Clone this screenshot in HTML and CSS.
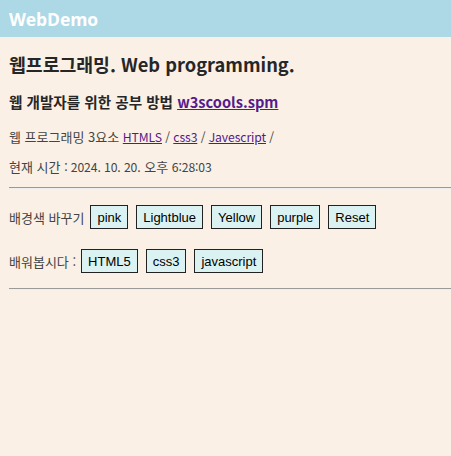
FILE: index.html
```html
<!DOCTYPE html>
<html lang="ko">
<head>
<meta charset="utf-8">
<title>WebDemo</title>
<link rel="stylesheet" href="styles.css">
</head>
<body>
<header class="topbar"><span class="brand">WebDemo</span></header>
<main class="content">
  <h2 class="title">웹프로그래밍. Web programming.</h2>
  <h3 class="subtitle">웹 개발자를 위한 공부 방법 <a href="#" class="vlink">w3scools.spm</a></h3>
  <p class="line">웹 프로그래밍 3요소 <span class="en"><a href="#" class="vlink">HTMLS</a> / <a href="#" class="vlink">css3</a> / <a href="#" class="vlink">Javescript</a> /</span></p>
  <p class="line line-time">현재 시간 <span class="en">: 2024. 10. 20.</span> 오후 <span class="en">6:28:03</span></p>
  <hr class="rule">
  <div class="row">
    <span class="label">배경색 바꾸기</span>
    <button class="btn">pink</button>
    <button class="btn">Lightblue</button>
    <button class="btn">Yellow</button>
    <button class="btn">purple</button>
    <button class="btn">Reset</button>
  </div>
  <div class="row row-second">
    <span class="label label-short">배워봅시다 :</span>
    <button class="btn">HTML5</button>
    <button class="btn">css3</button>
    <button class="btn">javascript</button>
  </div>
  <hr class="rule rule-bottom">
</main>
</body>
</html>
```
FILE: styles.css
```css
html, body {
  margin: 0;
  padding: 0;
}
body {
  background: #faf0e6;
  color: #333;
  font-family: "Noto Sans CJK KR", "Noto Sans", sans-serif;
  overflow: hidden;
}
.topbar {
  background: #add8e6;
  height: 37px;
  display: flex;
  align-items: center;
  padding-left: 9px;
}
.brand {
  color: #fff;
  font-weight: bold;
  font-size: 17.5px;
  line-height: 22px;
  letter-spacing: -0.1px;
  font-family: "Open Sans", "Noto Sans CJK KR", sans-serif;
}
.content {
  padding-left: 9px;
}
.title {
  margin: 15px 0 0;
  font-size: 18.3px;
  line-height: 24px;
  font-weight: bold;
  color: #262626;
}
.subtitle {
  margin: 16px 0 0;
  font-size: 14.6px;
  line-height: 20px;
  font-weight: bold;
  color: #262626;
}
.vlink {
  color: #551a8b;
}
.line {
  margin: 16px 0 0;
  font-size: 13px;
  line-height: 18px;
  color: #444;
}
.en {
  font-size: 12.2px;
  letter-spacing: -0.1px;
}
.line-time {
  margin-top: 12px;
}
.rule {
  margin: 11px 0 0;
  border: 0;
  border-top: 1px solid #9a9a9a;
  border-bottom: 1px solid #eee;
  height: 0;
}
.row {
  display: flex;
  align-items: center;
  gap: 8px;
  margin-top: 16px;
  height: 24px;
}
.row-second {
  margin-top: 20px;
}
.label {
  font-size: 13px;
  color: #444;
  margin-right: -2px;
}
.label-short {
  margin-right: -3px;
}
.btn {
  font-family: "Liberation Sans", Arial, sans-serif;
  font-size: 13px;
  height: 24px;
  padding: 0 6px;
  background: #daf2f2;
  border: 1px solid #222;
  color: #000;
  margin: 0;
}
.rule-bottom {
  margin-top: 15px;
}
```
